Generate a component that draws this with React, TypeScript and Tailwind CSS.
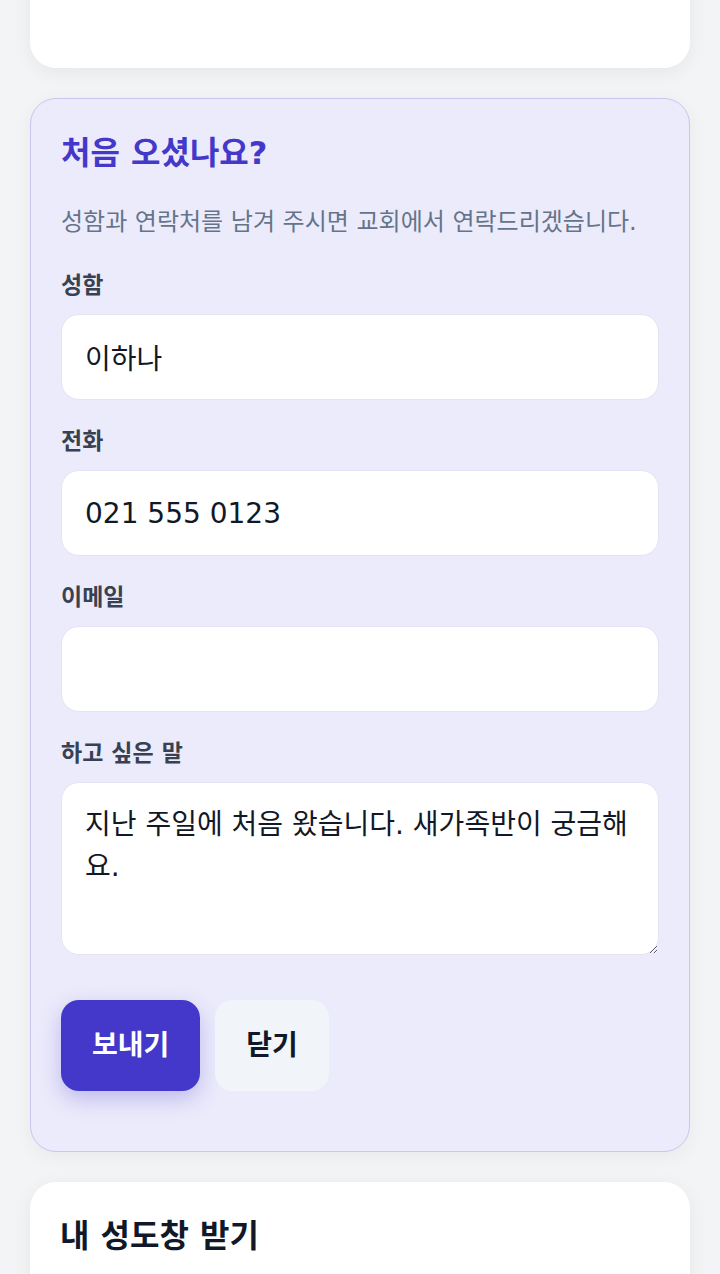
import React from "react";

const font = { fontFamily: '"DejaVu Sans", "Noto Sans CJK KR", sans-serif' };

function Field({ label, children }: { label: string; children: React.ReactNode }) {
  return (
    <div className="flex flex-col">
      <label className="mb-[12px] text-[23px] leading-[34px] font-bold text-[#374151]">{label}</label>
      {children}
    </div>
  );
}

const inputCls =
  "w-full h-[86px] rounded-[18px] border border-[#e4e3f3] bg-white px-[23px] py-[21px] text-[28px] leading-[42px] text-[#111827] outline-none";

export default function App() {
  return (
    <div
      className="min-h-[1274px] w-full overflow-hidden bg-[#f3f4f6] px-[30px] pb-[40px]"
      style={font}
    >
      <div className="flex flex-col gap-[30px]">
        <div className="-mt-[132px] h-[200px] rounded-[26px] bg-white shadow-[0_4px_20px_rgba(15,23,42,0.06)]" />

        <div className="rounded-[26px] border border-[#c9c5f1] bg-[#ecebfb] px-[30px] pt-[30px] pb-[60px] shadow-[0_4px_20px_rgba(15,23,42,0.05)]">
          <h2 className="text-[32px] leading-[48px] font-bold text-[#4338ca]">처음 오셨나요?</h2>
          <p className="mt-[27px] text-[24px] leading-[36px] text-[#64748b]">
            성함과 연락처를 남겨 주시면 교회에서 연락드리겠습니다.
          </p>
          <div className="mt-[28px] flex flex-col gap-[24px]">
            <Field label="성함">
              <input className={inputCls} defaultValue="이하나" />
            </Field>
            <Field label="전화">
              <input className={inputCls} defaultValue="021 555 0123" />
            </Field>
            <Field label="이메일">
              <input className={inputCls} defaultValue="" />
            </Field>
            <Field label="하고 싶은 말">
              <textarea
                className="block w-full h-[173px] rounded-[18px] border border-[#e4e3f3] bg-white px-[23px] py-[21px] text-[28px] leading-[42px] text-[#111827] outline-none"
                defaultValue="지난 주일에 처음 왔습니다. 새가족반이 궁금해요."
              />
            </Field>
          </div>
          <div className="mt-[45px] flex gap-[15px]">
            <button className="h-[91px] rounded-[18px] bg-[#4338ca] px-[31px] text-[28px] font-bold text-white shadow-[0_8px_22px_rgba(67,56,202,0.28)]">
              보내기
            </button>
            <button className="h-[91px] rounded-[18px] bg-[#f1f5f9] px-[31px] text-[28px] font-bold text-[#111827]">
              닫기
            </button>
          </div>
        </div>

        <div className="h-[200px] rounded-[26px] bg-white px-[30px] pt-[30px] shadow-[0_4px_20px_rgba(15,23,42,0.06)]">
          <h2 className="text-[32px] leading-[48px] font-bold text-[#111827]">내 성도창 받기</h2>
        </div>
      </div>
    </div>
  );
}
